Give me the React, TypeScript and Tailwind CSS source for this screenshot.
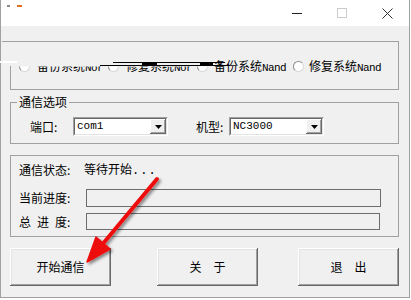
import React from 'react';

const cjk = "font-['Noto_Sans_CJK_SC',_'Noto_Sans',_sans-serif]";
const mono = "font-['Liberation_Mono',_monospace]";

function Radio({ clipped }: { clipped?: boolean }) {
    return (
        <span
            className={
                "block w-[11px] h-[11px] rounded-full bg-white border border-[#8c8c8c] border-b-[#d8d8d8] border-r-[#d8d8d8] shrink-0 " +
                (clipped ? "[clip-path:inset(50%_0_0_0)]" : "")
            }
        />
    );
}

function Combo({ value, width }: { value: string; width: string }) {
    return (
        <div className={"h-[19px] flex bg-white border border-[#a0a0a0] border-b-white border-r-white " + width}>
            <div className="flex-1 flex items-stretch border border-[#696969] border-b-[#e3e3e3] border-r-[#e3e3e3]">
                <span className={"flex-1 flex items-center pl-[2px] text-[11px] text-black " + mono}>{value}</span>
                <span className="w-[16px] bg-[#f0f0f0] flex items-center justify-center shadow-[inset_-1px_-1px_0_#696969,inset_1px_1px_0_#ffffff,inset_-2px_-2px_0_#a0a0a0]">
                    <svg width="7" height="4" viewBox="0 0 7 4">
                        <path d="M0 0 H7 L3.5 4 Z" fill="#000" />
                    </svg>
                </span>
            </div>
        </div>
    );
}

function Button({ label, className }: { label: string; className?: string }) {
    return (
        <button
            className={
                "w-[101px] h-[38px] bg-[#f0f0f0] text-[12px] text-black flex items-center justify-center shadow-[inset_-1px_-1px_0_#696969,inset_1px_1px_0_#ffffff,inset_-2px_-2px_0_#a0a0a0,inset_2px_2px_0_#e3e3e3] " +
                (className ?? "")
            }
        >
            {label}
        </button>
    );
}

export default function App() {
    const radios = [
        { label: '备份系统', tail: 'Nor', clipped: true, rm: 'ml-[9px]', tm: 'ml-[7px]', w: 'w-[66px]' },
        { label: '修复系统', tail: 'Nor', clipped: true, rm: 'ml-[5px]', tm: 'ml-[7px]', w: 'w-[66px]' },
        { label: '备份系统', tail: 'Nand', clipped: false, rm: 'ml-[5px]', tm: 'ml-[6px]', w: 'w-[72px]' },
        { label: '修复系统', tail: 'Nand', clipped: false, rm: 'ml-[7px]', tm: 'ml-[5px]', w: 'w-[72px]' }
    ];

    return (
        <div className={"w-[411px] h-[300px] bg-white overflow-hidden relative " + cjk}>
            <div className="w-[410px] h-[298px] border-l border-r border-b border-[#a0a0a0] flex flex-col">
                {/* title bar */}
                <div className="h-[26px] bg-white flex items-start relative">
                    <div className="flex items-center gap-[6px] pt-[5px] pl-[6px]">
                        <span className="w-[3px] h-[2px] bg-[#8a8a8a]" />
                        <span className="w-[5px] h-[2px] bg-[#e07020] ml-[1px]" />
                    </div>
                    <div className="ml-auto flex items-center h-[26px]">
                        <span className="w-[10px] h-px bg-[#222]" />
                        <span className="ml-[35px] w-[10px] h-[10px] border border-[#cccccc]" />
                        <svg className="ml-[35px] mr-[16px]" width="11" height="11" viewBox="0 0 11 11">
                            <path d="M0.5 0.5 L10.5 10.5 M10.5 0.5 L0.5 10.5" stroke="#333" strokeWidth="1" />
                        </svg>
                    </div>
                </div>

                {/* body */}
                <div className="flex-1 bg-[#f0f0f0] pl-[9px] flex flex-col relative">
                    {/* group 1 - radios */}
                    <div className="mt-[15px] w-[389px] h-[49px] border-t border-r border-b border-[#a0a0a0] relative flex items-center">
                        <span className="absolute left-[-8px] top-[-1px] w-[8px] h-px bg-[#a0a0a0]" />
                        <span className="absolute left-0 top-[24px] bottom-0 w-px bg-[#a0a0a0]" />
                        <span className="absolute left-[-10px] top-[19px] w-[17px] h-[2px] bg-white" />
                        <div className="flex items-center pt-[2px]">
                            {radios.map((r, i) => (
                                <div key={i} className={"flex items-center " + r.rm}>
                                    <Radio clipped={r.clipped || i === 2} />
                                    <span
                                        className={
                                            "text-[12px] text-black whitespace-nowrap leading-[14px] " + r.tm + " " + r.w + " " +
                                            (r.clipped ? "[clip-path:inset(50%_0_0_0)]" : "")
                                        }
                                    >
                                        {r.label}
                                        <span className={"text-[11px] tracking-[-0.6px] " + mono}>{r.tail}</span>
                                    </span>
                                </div>
                            ))}
                        </div>
                        {/* redraw glitch */}
                        <span className="absolute left-[90px] top-[23px] w-[130px] h-px bg-black" />
                        <span className="absolute left-[103px] top-[20px] w-[112px] h-px bg-black" />
                        <span className="absolute left-[132px] top-[20px] w-[15px] h-[3px] bg-black" />
                        <span className="absolute left-[190px] top-[20px] w-[13px] h-[3px] bg-black" />
                    </div>

                    {/* group 2 - 通信选项 */}
                    <div className="mt-[12px] w-[389px] h-[42px] border border-[#a0a0a0] relative">
                        <span className="absolute left-[6px] top-[-9px] px-[2px] bg-[#f0f0f0] text-[12px] leading-[16px] text-black">通信选项</span>
                        <div className="flex items-center pt-[14px] pl-[19px]">
                            <span className="w-[43px] text-[12px] text-black">端口:</span>
                            <Combo value="com1" width="w-[95px]" />
                            <span className="ml-[28px] w-[33px] text-[12px] text-black">机型:</span>
                            <Combo value="NC3000" width="w-[95px]" />
                        </div>
                    </div>

                    {/* group 3 - status */}
                    <div className="mt-[11px] w-[389px] h-[82px] border border-[#a0a0a0] pl-[8px] pt-[6px] flex flex-col text-[12px] text-black">
                        <div className="h-[16px] flex items-center">
                            <span className="w-[65px]">通信状态:</span>
                            <span>等待开始<span className={"tracking-[1px] " + mono}>...</span></span>
                        </div>
                        <div className="mt-[11px] h-[18px] flex items-center">
                            <span className="w-[67px]">当前进度:</span>
                            <div className="w-[295px] h-[18px] border border-[#6d6d6d]" />
                        </div>
                        <div className="mt-[6px] h-[17px] flex items-center">
                            <span className="w-[67px]">总{'\u2002'}进{'\u2002'}度:</span>
                            <div className="w-[294px] h-[17px] border border-[#6d6d6d]" />
                        </div>
                    </div>

                    {/* buttons */}
                    <div className="mt-[11px] flex">
                        <Button label="开始通信" />
                        <Button label={'关\u3000于'} className="ml-[46px]" />
                        <Button label={'退\u3000出'} className="ml-[40px]" />
                    </div>
                </div>
            </div>

            {/* red annotation arrow */}
            <svg className="absolute left-0 top-0 pointer-events-none" width="411" height="300" viewBox="0 0 411 300">
                <defs>
                    <filter id="sh" x="-20%" y="-20%" width="140%" height="140%">
                        <feDropShadow dx="2" dy="2" stdDeviation="1.5" floodColor="#000" floodOpacity="0.45" />
                    </filter>
                </defs>
                <g filter="url(#sh)">
                    <path d="M157 179 L101 246" stroke="#ee1111" strokeWidth="4" strokeLinecap="round" />
                    <path d="M87 262 L96 237 L110 249 Z" fill="#ee1111" stroke="#ee1111" strokeWidth="1.5" strokeLinejoin="round" />
                </g>
            </svg>
        </div>
    );
}
